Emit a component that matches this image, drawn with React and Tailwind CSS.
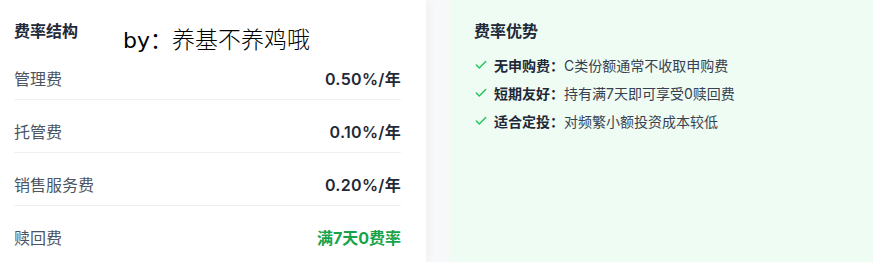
import { Check } from "lucide-react";

const fees = [
  { label: "管理费", value: "0.50%/年" },
  { label: "托管费", value: "0.10%/年" },
  { label: "销售服务费", value: "0.20%/年" },
  { label: "赎回费", value: "满7天0费率", highlight: true },
];

const perks = [
  { title: "无申购费", text: "C类份额通常不收取申购费" },
  { title: "短期友好", text: "持有满7天即可享受0赎回费" },
  { title: "适合定投", text: "对频繁小额投资成本较低" },
];

export default function App() {
  return (
    <div
      className="relative flex h-[262px] w-[873px] overflow-hidden bg-[#f7f8fa]"
      style={{ fontFamily: 'Inter, "Noto Sans CJK SC", sans-serif' }}
    >
      {/* fee breakdown card */}
      <div className="w-[426px] shrink-0 bg-white pl-[14px] pr-[25px] pt-5 shadow-[3px_0_10px_rgba(0,0,0,0.035)]">
        <h3 className="text-[16px] font-bold leading-[22px] text-[#1f2937]">费率结构</h3>
        <div className="mt-[5px]">
          {fees.map((f, i) => (
            <div
              key={f.label}
              className={`flex items-center justify-between pb-2 pt-5 leading-6 ${
                i < fees.length - 1 ? "border-b border-[#eef0f3]" : ""
              }`}
            >
              <span className="text-[16px] text-[#4b5563]">{f.label}</span>
              <span
                className={
                  f.highlight
                    ? "text-[16px] font-bold text-[#16a34a]"
                    : "text-[16px] font-semibold tracking-[0.02em] text-[#1f2937]"
                }
              >
                {f.value}
              </span>
            </div>
          ))}
        </div>
      </div>

      {/* advantages card */}
      <div className="ml-6 flex-1 bg-[#effcf3] pl-6 pt-5">
        <h3 className="text-[16px] font-bold leading-[22px] text-[#1f2937]">费率优势</h3>
        <ul className="mt-[9px]">
          {perks.map((p) => (
            <li key={p.title} className="flex h-7 items-center text-[14px]">
              <Check className="mr-[6px] h-[14px] w-[14px] text-[#22c55e]" strokeWidth={2.5} />
              <span className="font-bold text-[#1f2937]">{p.title}：</span>
              <span className="text-[#374151]">{p.text}</span>
            </li>
          ))}
        </ul>
      </div>

      {/* author tag laid over the card */}
      <div
        className="absolute left-[123px] top-[26px] flex items-baseline leading-[28px] text-black"
        style={{ fontFamily: '"DejaVu Sans", "Noto Sans CJK SC", sans-serif' }}
      >
        <span className="text-[22px]">by：</span>
        <span className="text-[23px] font-light">养基不养鸡哦</span>
      </div>
    </div>
  );
}
